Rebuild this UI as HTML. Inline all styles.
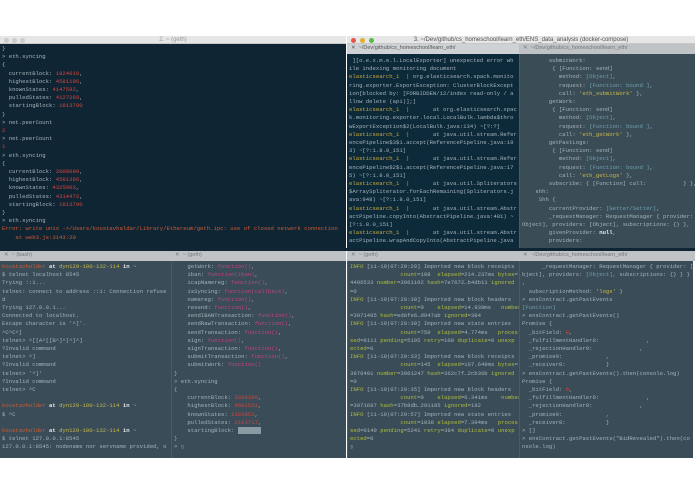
<!DOCTYPE html>
<html><head><meta charset="utf-8"><style>
*{margin:0;padding:0;box-sizing:border-box}
body{width:695px;height:494px;background:#fff;position:relative;overflow:hidden;font-family:"Liberation Mono",monospace}
.a{position:absolute;overflow:hidden}
.t{font-size:5.6px;line-height:8.2px;white-space:pre;color:#a3b2ba;padding-left:2px}
.title{background:#e6e6e6;border-bottom:1px solid #c8c8c8;font-family:"Liberation Sans",sans-serif;font-size:6px;color:#999;text-align:center;line-height:8px}
.tab{background:#cfd2d4;font-family:"Liberation Sans",sans-serif;font-size:5.5px;color:#777;line-height:9px;padding-left:4px;white-space:pre}
.tab.d{background:#bfc3c6}
.r{color:#d2443e}.o{color:#d05a30}.y{color:#c9a83a}.g{color:#c8b848}.p{color:#c0447c}.c{color:#6e9fb0}.w{color:#e8e8e8;font-weight:bold}.gr{color:#b0bd3c}
.dot{position:absolute;top:38px;width:5px;height:5px;border-radius:50%}
</style></head><body>
<div class="a title" style="left:0;top:36px;width:346px;height:8px">2. ~ (geth)</div>
<div class="dot" style="left:4px;background:#ccc"></div><div class="dot" style="left:12px;background:#ccc"></div><div class="dot" style="left:20px;background:#ccc"></div>
<div class="a t" style="left:0;top:44px;width:346px;height:206px;background:#0f2534;padding-top:1px">}
&gt; eth.syncing
{
  currentBlock: <span class="r">1824610</span>,
  highestBlock: <span class="r">4581196</span>,
  knownStates: <span class="r">4147592</span>,
  pulledStates: <span class="r">4127269</span>,
  startingBlock: <span class="r">1813790</span>
}
&gt; net.peerCount
<span class="r">2</span>
&gt; net.peerCount
<span class="r">1</span>
&gt; eth.syncing
{
  currentBlock: <span class="r">2008090</span>,
  highestBlock: <span class="r">4581366</span>,
  knownStates: <span class="r">4325903</span>,
  pulledStates: <span class="r">4314472</span>,
  startingBlock: <span class="r">1813790</span>
}
&gt; eth.syncing
<span class="o">Error: write unix -&gt;/Users/koustavhaldar/Library/Ethereum/geth.ipc: use of closed network connection
    at web3.js:3143:20</span></div>
<div class="a title" style="left:347px;top:36px;width:348px;height:8px;color:#555">3. ~/Dev/github/cs_homeschool/learn_eth/ENS_data_analysis (docker-compose)</div>
<div class="dot" style="left:351px;background:#e8554e"></div><div class="dot" style="left:360px;background:#e0b030"></div><div class="dot" style="left:369px;background:#58b848"></div>
<div class="a tab" style="left:347px;top:44px;width:172px;height:10px;color:#555">✕  ~/Dev/github/cs_homeschool/learn_eth/</div>
<div class="a tab d" style="left:519px;top:44px;width:176px;height:10px">✕  ~/Dev/github/cs_homeschool/learn_eth/</div>
<div class="a t" style="left:347px;top:54px;width:172px;height:196px;background:#0d2a3b;padding-top:3px"> ][o.e.x.m.e.l.LocalExporter] unexpected error wh
ile indexing monitoring document
<span class="y">elasticsearch_1  |</span> org.elasticsearch.xpack.monito
ring.exporter.ExportException: ClusterBlockExcept
ion[blocked by: [FORBIDDEN/12/index read-only / a
llow delete (api)];]
<span class="y">elasticsearch_1  |</span>       at org.elasticsearch.xpac
k.monitoring.exporter.local.LocalBulk.lambda$thro
wExportException$2(LocalBulk.java:134) ~[?:?]
<span class="y">elasticsearch_1  |</span>       at java.util.stream.Refer
encePipeline$3$1.accept(ReferencePipeline.java:19
3) ~[?:1.8.0_151]
<span class="y">elasticsearch_1  |</span>       at java.util.stream.Refer
encePipeline$2$1.accept(ReferencePipeline.java:17
5) ~[?:1.8.0_151]
<span class="y">elasticsearch_1  |</span>       at java.util.Spliterators
$ArraySpliterator.forEachRemaining(Spliterators.j
ava:948) ~[?:1.8.0_151]
<span class="y">elasticsearch_1  |</span>       at java.util.stream.Abstr
actPipeline.copyInto(AbstractPipeline.java:481) ~
[?:1.8.0_151]
<span class="y">elasticsearch_1  |</span>       at java.util.stream.Abstr
actPipeline.wrapAndCopyInto(AbstractPipeline.java</div>
<div class="a t" style="left:519px;top:54px;width:176px;height:196px;background:#3a4d57;padding-top:3px;border-left:1px solid #556">        submitWork:
         { [Function: send]
           method: <span class="c">[Object]</span>,
           request: <span class="c">[Function: bound ]</span>,
           call: <span class="g">'eth_submitWork'</span> },
        getWork:
         { [Function: send]
           method: <span class="c">[Object]</span>,
           request: <span class="c">[Function: bound ]</span>,
           call: <span class="g">'eth_getWork'</span> },
        getPastLogs:
         { [Function: send]
           method: <span class="c">[Object]</span>,
           request: <span class="c">[Function: bound ]</span>,
           call: <span class="g">'eth_getLogs'</span> },
        subscribe: { [Function] call:           } },
    shh:
     Shh {
        currentProvider: <span class="c">[Getter/Setter]</span>,
        _requestManager: RequestManager { provider: [
Object], providers: [Object], subscriptions: {} },
        givenProvider: <span class="w">null</span>,
        providers:</div>
<div class="a" style="left:0;top:248px;width:695px;height:3px;background:#0f2534"></div>
<div class="a tab d" style="left:0;top:251px;width:171px;height:10px">✕  ~ (bash)</div>
<div class="a tab d" style="left:171px;top:251px;width:175px;height:10px">✕  ~ (geth)</div>
<div class="a t" style="left:0;top:261px;width:171px;height:197px;background:#3a4c57;padding-top:2px"><span class="o">koustavholder</span> <span class="w">at</span> <span class="g">dyn129-100-132-114</span> <span class="w">in</span> ~
$ telnet localhost 8545
Trying ::1...
telnet: connect to address ::1: Connection refuse
d
Trying 127.0.0.1...
Connected to localhost.
Escape character is '^]'.
^C^C^]
telnet&gt; ^[[A^[[B^]^]^]^]
?Invalid command
telnet&gt; ^]
?Invalid command
telnet&gt; '^]'
?Invalid command
telnet&gt; ^C

<span class="o">koustavholder</span> <span class="w">at</span> <span class="g">dyn129-100-132-114</span> <span class="w">in</span> ~
$ ^C

<span class="o">koustavholder</span> <span class="w">at</span> <span class="g">dyn129-100-132-114</span> <span class="w">in</span> ~
$ telnet 127.0.0.1:8545
127.0.0.1:8545: nodename nor servname provided, o</div>
<div class="a t" style="left:171px;top:261px;width:175px;height:197px;background:#3a4c57;padding-top:2px;border-left:1px solid #556">    getWork: <span class="p">function()</span>,
    iban: <span class="p">function(iban)</span>,
    icapNamereg: <span class="p">function()</span>,
    isSyncing: <span class="p">function(callback)</span>,
    namereg: <span class="p">function()</span>,
    resend: <span class="p">function()</span>,
    sendIBANTransaction: <span class="p">function()</span>,
    sendRawTransaction: <span class="p">function()</span>,
    sendTransaction: <span class="p">function()</span>,
    sign: <span class="p">function()</span>,
    signTransaction: <span class="p">function()</span>,
    submitTransaction: <span class="p">function()</span>,
    submitWork: <span class="p">function()</span>
}
&gt; eth.syncing
{
    currentBlock: <span class="r">3368399</span>,
    highestBlock: <span class="r">4581531</span>,
    knownStates: <span class="r">2191853</span>,
    pulledStates: <span class="r">2183717</span>,
    startingBlock: <span style="background:#8a9aa2;color:#8a9aa2">1813790</span>
}
&gt; ▯</div>
<div class="a tab d" style="left:347px;top:251px;width:172px;height:10px">✕  ~ (geth)</div>
<div class="a tab d" style="left:519px;top:251px;width:176px;height:10px">✕  ~/Dev/github/cs_homeschool/learn_eth/</div>
<div class="a t" style="left:347px;top:261px;width:172px;height:197px;background:#3a4c57;padding-top:2px;border-left:1px solid #556"><span class="gr">INFO</span> [11-19|07:29:29] Imported new block receipts
               <span class="gr">count</span>=108  <span class="gr">elapsed</span>=214.237ms <span class="gr">bytes</span>=
4406533 <span class="gr">number</span>=3961102 <span class="gr">hash</span>=7e7672…b4db11 <span class="gr">ignored</span>
=0
<span class="gr">INFO</span> [11-19|07:29:30] Imported new block headers
               <span class="gr">count</span>=0    <span class="gr">elapsed</span>=14.939ms   <span class="gr">number</span>
=3971495 <span class="gr">hash</span>=ed8fe6…d947ab <span class="gr">ignored</span>=384
<span class="gr">INFO</span> [11-19|07:29:30] Imported new state entries
               <span class="gr">count</span>=750  <span class="gr">elapsed</span>=4.774ms   <span class="gr">proces</span>
<span class="gr">sed</span>=8111 <span class="gr">pending</span>=5105 <span class="gr">retry</span>=108 <span class="gr">duplicate</span>=0 <span class="gr">unexp</span>
<span class="gr">ected</span>=0
<span class="gr">INFO</span> [11-19|07:29:33] Imported new block receipts
               <span class="gr">count</span>=145  <span class="gr">elapsed</span>=107.649ms <span class="gr">bytes</span>=
3976401 <span class="gr">number</span>=3961247 <span class="gr">hash</span>=362c7f…2cb36b <span class="gr">ignored</span>
=0
<span class="gr">INFO</span> [11-19|07:29:35] Imported new block headers
               <span class="gr">count</span>=0    <span class="gr">elapsed</span>=6.341ms    <span class="gr">number</span>
=3971687 <span class="gr">hash</span>=37b8db…291185 <span class="gr">ignored</span>=192
<span class="gr">INFO</span> [11-19|07:29:57] Imported new state entries
               <span class="gr">count</span>=1038 <span class="gr">elapsed</span>=7.394ms   <span class="gr">proces</span>
<span class="gr">sed</span>=9149 <span class="gr">pending</span>=5241 <span class="gr">retry</span>=384 <span class="gr">duplicate</span>=0 <span class="gr">unexp</span>
<span class="gr">ected</span>=0
▯</div>
<div class="a t" style="left:519px;top:261px;width:174px;height:197px;background:#3a4c57;padding-top:2px;border-left:1px solid #556">      _requestManager: RequestManager { provider: [O
bject], providers: <span class="c">[Object]</span>, subscriptions: {} } }
,
  subscriptionMethod: <span class="g">'logs'</span> }
&gt; ensContract.getPastEvents
<span class="c">[Function]</span>
&gt; ensContract.getPastEvents()
Promise {
  _bitField: <span class="r">0</span>,
  _fulfillmentHandler0:              ,
  _rejectionHandler0:              ,
  _promise0:             ,
  _receiver0:            }
&gt; ensContract.getPastEvents().then(console.log)
Promise {
  _bitField: <span class="r">0</span>,
  _fulfillmentHandler0:              ,
  _rejectionHandler0:              ,
  _promise0:             ,
  _receiver0:            }
&gt; []
&gt; ensContract.getPastEvents("BidRevealed").then(co
nsole.log)</div>
</body></html>
